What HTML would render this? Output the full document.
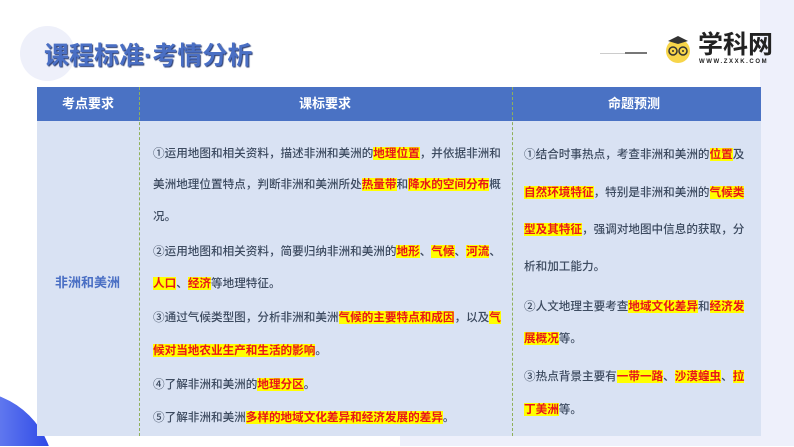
<!DOCTYPE html>
<html><head><meta charset="utf-8"><style>
*{margin:0;padding:0;box-sizing:border-box}
html,body{width:794px;height:447px;overflow:hidden}
body{background:#fff;position:relative;font-family:"Liberation Sans","Noto Sans CJK SC",sans-serif;line-height:1}
.abs{position:absolute}
.t{position:absolute;font-size:11.6px;color:#3d4b60;white-space:nowrap;line-height:14px;font-weight:500}
.h{background:#ffff00;color:#e8161b;font-weight:bold}
.hd{position:absolute;top:87px;height:34px;color:#fff;font-weight:bold;font-size:13px;line-height:34px}
</style></head><body>
<div class="abs" style="left:760px;top:0;width:34px;height:446px;background:#eef0fb"></div>
<div class="abs" style="left:400px;top:436px;width:394px;height:10px;background:#eef0fb"></div>
<svg class="abs" style="left:0;top:390px;display:block" width="60" height="56" viewBox="0 0 60 56">
<defs><linearGradient id="g" x1="0" x2="1" y1="0" y2="0"><stop offset="0" stop-color="#c7cdf7"/><stop offset="0.7" stop-color="#5c74ee"/><stop offset="1" stop-color="#2a45e6"/></linearGradient></defs>
<circle cx="-30" cy="85" r="84" fill="url(#g)"/>
</svg>
<div class="abs" style="left:20px;top:26px;width:55px;height:55px;border-radius:50%;background:#eef0fa"></div>
<div class="abs" style="left:44px;top:42px;font-size:25px;line-height:28px;font-weight:bold;color:#4a6fc4;text-shadow:1px 1px 1px #2b3d70">课程标准·考情分析</div>
<div class="abs" style="left:625px;top:52px;width:22px;height:2px;background:#777"></div>
<div class="abs" style="left:600px;top:53px;width:25px;height:1px;background:#ccc"></div>
<svg class="abs" style="left:664px;top:32px" width="32" height="32" viewBox="0 0 32 32">
<circle cx="14" cy="19" r="12" fill="#f7d54a"/>
<path d="M4 9 L14 4 L24 9 L14 12Z" fill="#333"/>
<circle cx="9" cy="19" r="4" fill="none" stroke="#333" stroke-width="1.5"/>
<circle cx="19" cy="19" r="4" fill="none" stroke="#333" stroke-width="1.5"/>
<circle cx="9" cy="19" r="1" fill="#333"/><circle cx="19" cy="19" r="1" fill="#333"/>
</svg>
<div class="abs" style="left:698px;top:30px;font-size:25px;font-weight:bold;color:#222;line-height:30px">学科网</div>
<div class="abs" style="left:699px;top:59px;font-size:6px;font-weight:bold;color:#222;letter-spacing:1.6px">WWW.ZXXK.COM</div>

<div class="abs" style="left:37px;top:87px;width:724px;height:34px;background:#4a72c4"></div>
<div class="abs" style="left:37px;top:121px;width:724px;height:315px;background:#d9e2f3"></div>
<div class="abs" style="left:139px;top:87px;height:349px;border-left:1px dashed #8fb05a"></div>
<div class="abs" style="left:512px;top:87px;height:349px;border-left:1px dashed #8fb05a"></div>
<div class="hd" style="left:62px">考点要求</div>
<div class="hd" style="left:299px">课标要求</div>
<div class="hd" style="left:608px">命题预测</div>
<div class="abs" style="left:55px;top:276px;font-size:13px;font-weight:bold;color:#4a6fc4">非洲和美洲</div>

<div class="t" style="left:153px;top:147px">①运用地图和相关资料，描述非洲和美洲的<span class="h">地理位置</span>，并依据非洲和</div>
<div class="t" style="left:153px;top:178px">美洲地理位置特点，判断非洲和美洲所处<span class="h">热量带</span>和<span class="h">降水的空间分布</span>概</div>
<div class="t" style="left:153px;top:210px">况。</div>
<div class="t" style="left:153px;top:245px">②运用地图和相关资料，简要归纳非洲和美洲的<span class="h">地形</span>、<span class="h">气候</span>、<span class="h">河流</span>、</div>
<div class="t" style="left:153px;top:277px"><span class="h">人口</span>、<span class="h">经济</span>等地理特征。</div>
<div class="t" style="left:153px;top:311px">③通过气候类型图，分析非洲和美洲<span class="h">气候的主要特点和成因</span>，以及<span class="h">气</span></div>
<div class="t" style="left:153px;top:344px"><span class="h">候对当地农业生产和生活的影响</span>。</div>
<div class="t" style="left:153px;top:378px">④了解非洲和美洲的<span class="h">地理分区</span>。</div>
<div class="t" style="left:153px;top:411px">⑤了解非洲和美洲<span class="h">多样的地域文化差异和经济发展的差异</span>。</div>

<div class="t" style="left:524px;top:148px">①结合时事热点，考查非洲和美洲的<span class="h">位置</span>及</div>
<div class="t" style="left:524px;top:186px"><span class="h">自然环境特征</span>，特别是非洲和美洲的<span class="h">气候类</span></div>
<div class="t" style="left:524px;top:223px"><span class="h">型及其特征</span>，强调对地图中信息的获取，分</div>
<div class="t" style="left:524px;top:260px">析和加工能力。</div>
<div class="t" style="left:524px;top:300px">②人文地理主要考查<span class="h">地域文化差异</span>和<span class="h">经济发</span></div>
<div class="t" style="left:524px;top:332px"><span class="h">展概况</span>等。</div>
<div class="t" style="left:524px;top:370px">③热点背景主要有<span class="h">一带一路</span>、<span class="h">沙漠蝗虫</span>、<span class="h">拉</span></div>
<div class="t" style="left:524px;top:403px"><span class="h">丁美洲</span>等。</div>
</body></html>
